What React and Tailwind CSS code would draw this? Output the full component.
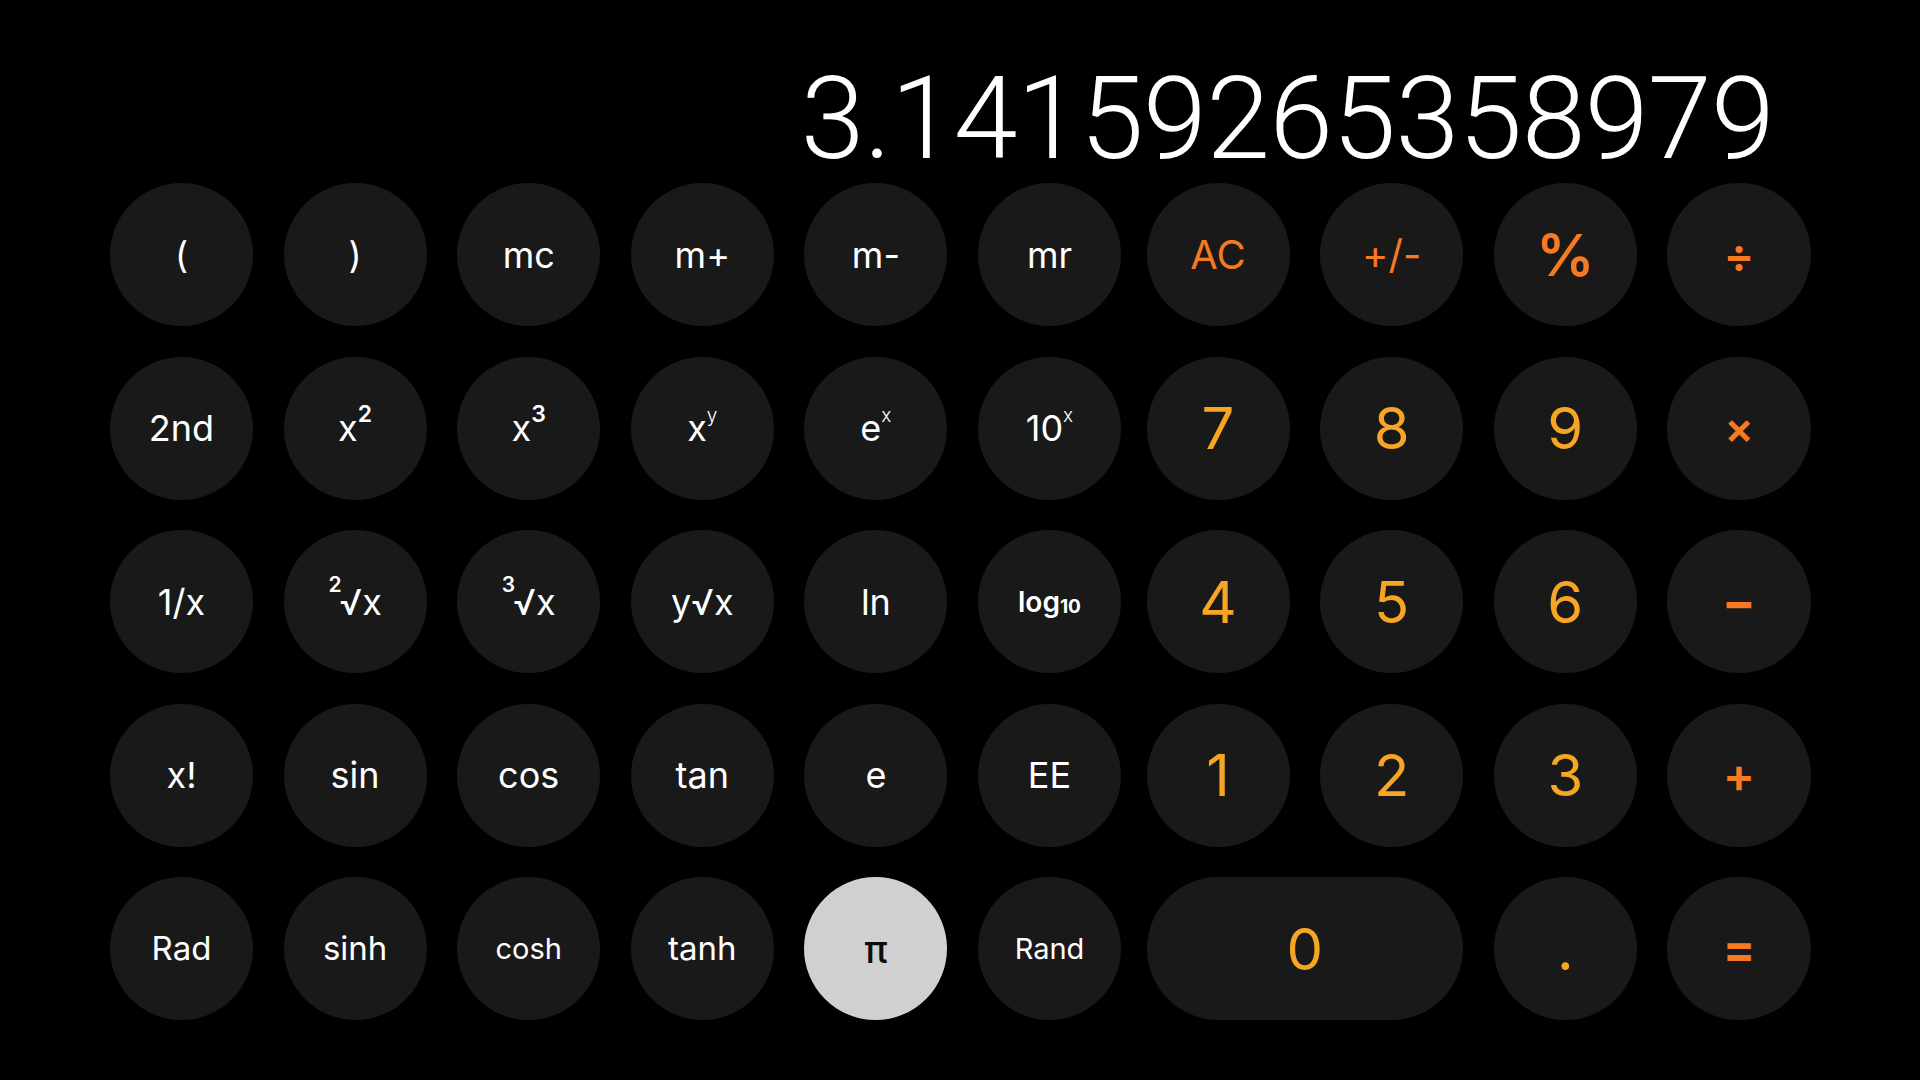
const TONE = {
  fn: "bg-[#191919] text-white",
  op: "bg-[#191919] text-[#f77a22]",
  num: "bg-[#191919] text-[#f6a623]",
  light: "bg-[#d0d0d0] text-[#0d0d0d]",
};

function Key({ children, className = "", wide = false, tone = "fn" }) {
  return (
    <div
      className={`flex h-[143px] items-center justify-center rounded-full leading-none ${
        wide ? "col-span-2" : ""
      } ${TONE[tone]} ${className}`}
    >
      {children}
    </div>
  );
}

// kleine Hochzahl, per transform verschoben damit die Zeilenhöhe gleich bleibt
function Sup({ children, className = "" }) {
  return <span className={`inline-block leading-none ${className}`}>{children}</span>;
}

const LBL = "text-[36px]";
const SMALL = "text-[29px]";

const LEFT = [
  // Reihe 1
  <Key key="lp" className={LBL}>(</Key>,
  <Key key="rp" className={LBL}>)</Key>,
  <Key key="mc" className={LBL}>mc</Key>,
  <Key key="mp" className={LBL}>m+</Key>,
  <Key key="mm" className={LBL}>m-</Key>,
  <Key key="mr" className={LBL}>mr</Key>,
  // Reihe 2
  <Key key="2nd" className={LBL}>2nd</Key>,
  <Key key="x2" className={LBL}>
    x<Sup className="-translate-y-[14px] text-[23px] font-semibold">2</Sup>
  </Key>,
  <Key key="x3" className={LBL}>
    x<Sup className="-translate-y-[14px] text-[23px] font-semibold">3</Sup>
  </Key>,
  <Key key="xy" className={LBL}>
    x<Sup className="-translate-y-[13px] text-[19px] font-light">y</Sup>
  </Key>,
  <Key key="ex" className={LBL}>
    e<Sup className="-translate-y-[13px] text-[19px] font-light">x</Sup>
  </Key>,
  <Key key="10x" className={LBL}>
    10<Sup className="-translate-y-[13px] text-[19px] font-light">x</Sup>
  </Key>,
  // Reihe 3
  <Key key="inv" className={LBL}>1/x</Key>,
  <Key key="r2" className={LBL}>
    <Sup className="-mr-[2px] -translate-y-[17px] text-[21px] font-semibold">2</Sup>√x
  </Key>,
  <Key key="r3" className={LBL}>
    <Sup className="-mr-[2px] -translate-y-[17px] text-[21px] font-semibold">3</Sup>√x
  </Key>,
  <Key key="ry" className={LBL}>y√x</Key>,
  <Key key="ln" className={LBL}>ln</Key>,
  <Key key="log" className="text-[28px] font-semibold">
    log<Sup className="translate-y-[5px] text-[19px] font-bold">10</Sup>
  </Key>,
  // Reihe 4
  <Key key="fac" className={LBL}>x!</Key>,
  <Key key="sin" className={LBL}>sin</Key>,
  <Key key="cos" className={LBL}>cos</Key>,
  <Key key="tan" className={LBL}>tan</Key>,
  <Key key="e" className={LBL}>e</Key>,
  <Key key="ee" className={LBL}>EE</Key>,
  // Reihe 5
  <Key key="rad" className="text-[33px]">Rad</Key>,
  <Key key="sinh" className="text-[33px]">sinh</Key>,
  <Key key="cosh" className={SMALL}>cosh</Key>,
  <Key key="tanh" className="text-[33px]">tanh</Key>,
  <Key key="pi" tone="light" className="text-[38px] font-medium">π</Key>,
  <Key key="rand" className={SMALL}>Rand</Key>,
];

const RIGHT = [
  <Key key="ac" tone="op" className="text-[40px]">AC</Key>,
  <Key key="pm" tone="op" className="text-[40px]">+/-</Key>,
  <Key key="pct" tone="op" className="text-[58px] font-semibold">%</Key>,
  <Key key="div" tone="op" className="text-[46px] font-semibold">÷</Key>,
  <Key key="7" tone="num" className="text-[58px]">7</Key>,
  <Key key="8" tone="num" className="text-[58px]">8</Key>,
  <Key key="9" tone="num" className="text-[58px]">9</Key>,
  <Key key="mul" tone="op" className="text-[44px] font-semibold">×</Key>,
  <Key key="4" tone="num" className="text-[58px]">4</Key>,
  <Key key="5" tone="num" className="text-[58px]">5</Key>,
  <Key key="6" tone="num" className="text-[58px]">6</Key>,
  <Key key="sub" tone="op" className="text-[50px] font-bold">−</Key>,
  <Key key="1" tone="num" className="text-[58px]">1</Key>,
  <Key key="2" tone="num" className="text-[58px]">2</Key>,
  <Key key="3" tone="num" className="text-[58px]">3</Key>,
  <Key key="add" tone="op" className="text-[48px] font-semibold">+</Key>,
  <Key key="0" wide tone="num" className="text-[58px]">0</Key>,
  <Key key="dot" tone="num" className="text-[58px]">.</Key>,
  <Key key="eq" tone="op" className="text-[48px] font-bold">=</Key>,
];

export default function App() {
  return (
    <div className="h-screen w-full overflow-hidden bg-black pt-[61px] font-['Inter','Noto_Sans',sans-serif]">
      <div className="h-[115px] pr-[146px] text-right font-['Roboto','Liberation_Sans',sans-serif] text-[115px] font-light leading-none tracking-[-0.7px] text-white">
        3.14159265358979
      </div>

      <div className="mt-[7px] flex pl-[110px]">
        <div className="grid w-[1011px] grid-cols-6 gap-x-[30.6px] gap-y-[30.5px]">{LEFT}</div>
        <div className="ml-[25.5px] grid w-[664px] grid-cols-4 gap-x-[30.6px] gap-y-[30.5px]">{RIGHT}</div>
      </div>
    </div>
  );
}
